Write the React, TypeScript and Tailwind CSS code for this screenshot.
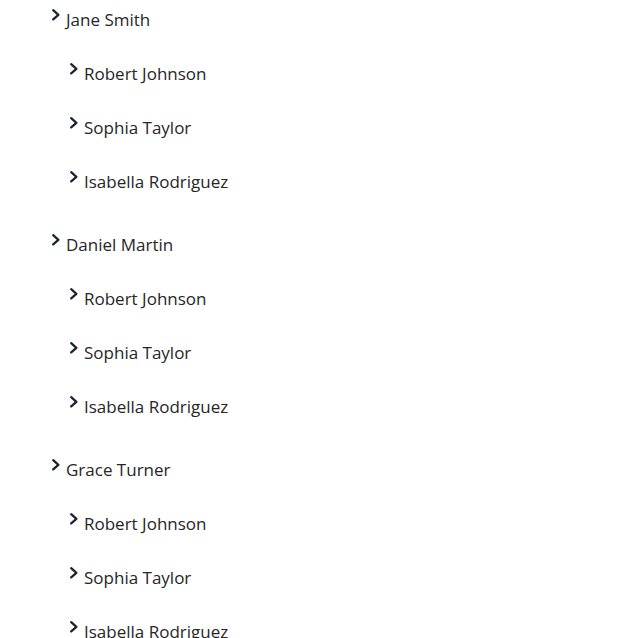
const people = ["Jane Smith", "Daniel Martin", "Grace Turner"];
const reports = ["Robert Johnson", "Sophia Taylor", "Isabella Rodriguez"];

function Chevron() {
  return (
    <svg
      width="12"
      height="14"
      viewBox="0 0 12 14"
      className="shrink-0 text-[#1b2431]"
      aria-hidden
    >
      <polyline
        points="3.2,2.2 8.4,6.8 3.2,11.4"
        fill="none"
        stroke="currentColor"
        strokeWidth="2.3"
        strokeLinecap="round"
        strokeLinejoin="round"
      />
    </svg>
  );
}

function Row({ label }: { label: string }) {
  return (
    <div className="flex items-start gap-1">
      <Chevron />
      <span className="text-[17px] leading-6">{label}</span>
    </div>
  );
}

export default function App() {
  return (
    <div
      className="min-h-screen bg-white pl-[50px] text-[#262626]"
      style={{ fontFamily: '"Open Sans", "Noto Sans", sans-serif' }}
    >
      <ul className="flex flex-col gap-[39px] pt-2">
        {people.map((name) => (
          <li key={name} className="flex flex-col gap-[30px]">
            <Row label={name} />
            <ul className="flex flex-col gap-[30px] pl-[18px]">
              {reports.map((r) => (
                <li key={r}>
                  <Row label={r} />
                </li>
              ))}
            </ul>
          </li>
        ))}
      </ul>
    </div>
  );
}
